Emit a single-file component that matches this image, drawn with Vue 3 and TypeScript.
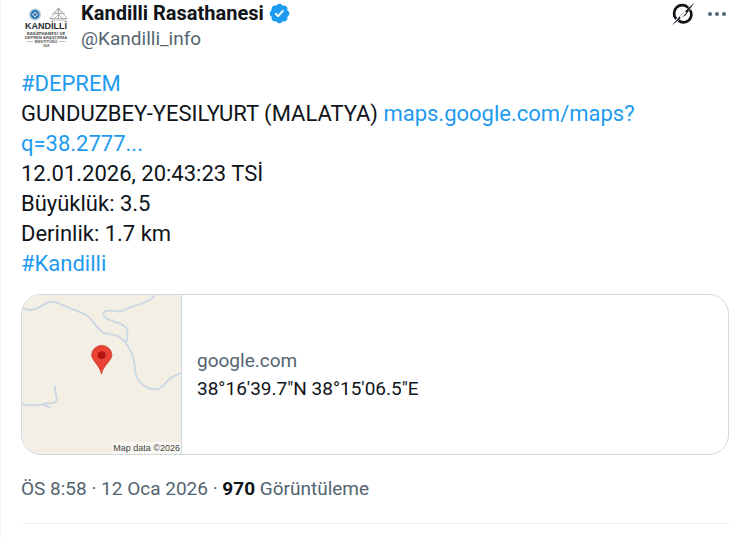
<script setup lang="ts">
interface Detail {
  label: string
  value: string
}

const details: Detail[] = [
  { label: 'Büyüklük', value: '3.5' },
  { label: 'Derinlik', value: '1.7 km' },
]
</script>

<template>
  <article class="post">
    <header class="head">
      <a class="avatar" href="#" aria-label="Kandilli Rasathanesi">
        <svg viewBox="0 0 50 50" width="50" height="50" aria-hidden="true">
          <circle cx="14" cy="13.500" r="6" fill="#b4cbdc" />
          <circle cx="14" cy="13.500" r="4.400" fill="#2674b4" />
          <path d="M14 11v5M11.500 13.500h5" stroke="#fff" stroke-width="1.800" />
          <circle cx="14" cy="13.500" r="1.200" fill="#174f88" />
          <g fill="none" stroke="#9a9a9a" stroke-width=".7">
            <path d="M37.500 7.500L29 17.500H46ZM31 12.500h13M33 10l9 7.500M42 10l-9 7.500M37.500 7.500v10M29 17.500l3 1.500h11l3-1.500" />
            <circle cx="37.500" cy="8.500" r="1.300" />
          </g>
          <g font-family="Liberation Sans, sans-serif" text-anchor="middle" font-weight="700">
            <text x="25" y="28" font-size="9" fill="#2b2b2f">KANDİLLİ</text>
            <text x="25" y="34" font-size="4" fill="#555" font-family="DejaVu Sans, sans-serif">RASATHANESİ VE</text>
            <text x="25" y="38" font-size="4" fill="#555">DEPREM ARAŞTIRMA</text>
            <text x="25" y="42" font-size="4" fill="#555">ENSTİTÜSÜ</text>
            <text x="25" y="46" font-size="3" fill="#666">1868</text>
          </g>
          <path d="M4 40.500h8M38 40.500h8" stroke="#999" stroke-width=".6" />
        </svg>
      </a>
      <div class="who">
        <a class="name" href="#">
          <span>Kandilli Rasathanesi</span>
          <svg class="badge" viewBox="0 0 22 22" width="23" height="23" role="img" aria-label="Onaylı hesap">
            <path fill="#1d9bf0" d="M20.396 11c-.018-.646-.215-1.275-.57-1.816-.354-.54-.852-.972-1.438-1.246.223-.607.270-1.264.140-1.897-.131-.634-.437-1.218-.882-1.687-.470-.445-1.053-.750-1.687-.882-.633-.130-1.290-.083-1.897.140-.273-.587-.704-1.086-1.245-1.440S11.647 1.620 11 1.604c-.646.017-1.273.213-1.813.568s-.969.854-1.240 1.440c-.608-.223-1.267-.272-1.902-.140-.635.130-1.220.436-1.690.882-.445.470-.749 1.055-.878 1.688-.130.633-.080 1.290.144 1.896-.587.274-1.087.705-1.443 1.245-.356.540-.555 1.170-.574 1.817.020.647.218 1.276.574 1.817.356.540.856.972 1.443 1.245-.224.606-.274 1.263-.144 1.896.130.634.433 1.218.877 1.688.470.443 1.054.747 1.687.878.633.132 1.290.084 1.897-.136.274.586.705 1.084 1.246 1.439.540.354 1.170.551 1.816.569.647-.016 1.276-.213 1.817-.567s.972-.854 1.245-1.440c.604.239 1.266.296 1.903.164.636-.132 1.220-.447 1.680-.907.460-.460.776-1.044.908-1.681s.075-1.299-.165-1.903c.586-.274 1.084-.705 1.439-1.246.354-.540.551-1.170.569-1.816zM9.662 14.850l-3.429-3.428 1.293-1.302 2.072 2.072 4.400-4.794 1.347 1.246z" />
          </svg>
        </a>
        <a class="handle" href="#">@Kandilli_info</a>
      </div>
      <div class="actions">
        <button type="button" aria-label="Grok">
          <svg viewBox="0 0 24 24" width="24" height="24" aria-hidden="true">
            <path d="M17.200 5.800A7.900 7.900 0 0 0 5.200 16.800M19 8A7.900 7.900 0 0 1 7.500 18.600" fill="none" stroke="#0f1419" stroke-width="2.700" />
            <path d="M23.300.8L14.800 13.100 9.600 16.200 .8 23.400 8.500 14.500 15.200 8.200Z" fill="#0f1419" />
            <path d="M9.300 15.700L14.800 9.900" stroke="#fff" stroke-width="2" />
          </svg>
        </button>
        <button type="button" aria-label="Daha fazla">
          <svg viewBox="0 0 24 24" width="24" height="24" fill="#536471" aria-hidden="true">
            <circle cx="5" cy="12" r="2" />
            <circle cx="12" cy="12" r="2" />
            <circle cx="19" cy="12" r="2" />
          </svg>
        </button>
      </div>
    </header>

    <div class="body">
      <div><a href="#">#DEPREM</a></div>
      <div>GUNDUZBEY-YESILYURT (MALATYA) <a href="#">maps.google.com/maps?<wbr />q=38.2777...</a></div>
      <div>12.01.2026, 20:43:23 TSİ</div>
      <div v-for="d in details" :key="d.label">{{ d.label }}: {{ d.value }}</div>
      <div><a href="#">#Kandilli</a></div>
    </div>

    <a class="card" href="#">
      <div class="map">
        <svg viewBox="0 0 160 160" width="159" height="159" aria-hidden="true">
          <rect width="160" height="160" fill="#f4efe5" />
          <g fill="none" stroke="#cbd8e3" stroke-width="1.900" stroke-linecap="round" stroke-linejoin="round">
            <path d="M0 13C6 16 12 16 18 12C25 8 28 5 36 8C44 12 54 15 60 18C72 22 75 35 82 38C88 40 94 39 99 43C108 49 114 65 114 78C116 88 125 95 135 95C144 95 144 82 160 79" />
            <path d="M134 0C128 8 119 9 113 11C102 15 101 18 93 16C81 14 80 20 84 23C91 28 106 28 106 37C106 42 107 44 105 47" />
            <path d="M33 92L35 107C32 110 25 108 20 110C13 112 6 111 0 110M20 110L28 113" />
          </g>
          <path d="M80 79.500C78 70 70 66 70 60A10.300 10.300 0 0 1 90.500 60C90.500 66 82 70 80 79.500Z" fill="#ea4335" stroke="#c63b2e" stroke-width=".8" />
          <circle cx="80.200" cy="60.500" r="4" fill="#b31412" />
        </svg>
        <span class="credit">Map data ©2026</span>
      </div>
      <div class="info">
        <span class="domain">google.com</span>
        <span class="coords">38°16'39.7"N 38°15'06.5"E</span>
      </div>
    </a>

    <footer class="meta">
      <a href="#">ÖS 8:58 · 12 Oca 2026</a> · <strong>970</strong> Görüntüleme
    </footer>
  </article>
</template>

<style>
body {
  margin: 0;
  background: #fff;
}
</style>

<style scoped>
.post {
  box-sizing: border-box;
  min-height: 100vh;
  padding: 1px 3px 14px 20px;
  border-left: 1px solid #eff3f4;
  font-family: Roboto, "Liberation Sans", sans-serif;
  font-size: 19px;
  line-height: 25px;
  color: #0f1419;
}

a {
  color: inherit;
  text-decoration: none;
}

.head {
  display: flex;
  gap: 10px;
}

.avatar {
  display: block;
  height: 50px;
  border-radius: 50%;
  overflow: hidden;
}

.avatar svg,
.map svg,
.actions svg {
  display: block;
}

.who {
  display: flex;
  flex: 1;
  flex-direction: column;
  align-items: flex-start;
}

.name {
  display: flex;
  align-items: center;
  gap: 4px;
  font-size: 20px;
  font-weight: 700;
}

.handle,
.domain,
.meta {
  color: #536471;
}

.actions {
  display: flex;
  align-items: flex-start;
  gap: 10px;
  padding-top: 1px;
}

.actions button {
  padding: 0;
  border: 0;
  background: none;
}

.body {
  padding-top: 18px;
  font-size: 22px;
  line-height: 30px;
}

.body a {
  color: #1d9bf0;
}

.card {
  display: flex;
  margin-top: 15px;
  border: 1px solid #cfd9de;
  border-radius: 20px;
  overflow: hidden;
}

.map {
  position: relative;
  border-right: 1px solid #cfd9de;
}

.credit {
  position: absolute;
  right: 0;
  bottom: 0;
  padding: 0 1px;
  background: #faf7f2;
  font-family: "Liberation Sans", sans-serif;
  font-size: 9px;
  line-height: 12px;
  color: #444;
}

.info {
  display: flex;
  flex: 1;
  flex-direction: column;
  justify-content: center;
  gap: 3px;
  padding: 0 15px;
}

.meta {
  padding: 21px 0 22px;
  border-bottom: 1px solid #eff3f4;
}

.meta strong {
  color: #0f1419;
}
</style>
